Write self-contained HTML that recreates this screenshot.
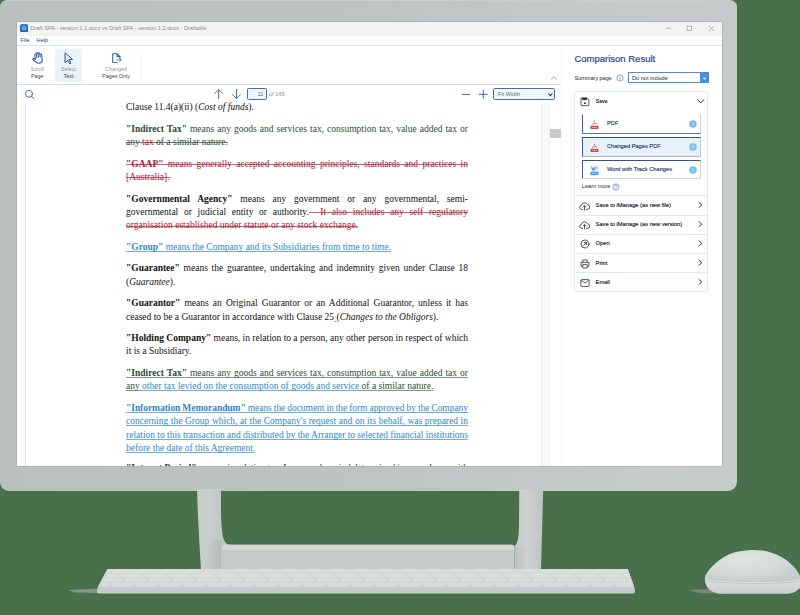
<!DOCTYPE html>
<html>
<head>
<meta charset="utf-8">
<title>Draftable</title>
<style>
html,body{margin:0;padding:0;}
body{width:800px;height:615px;overflow:hidden;background:#47704b;position:relative;font-family:"Liberation Sans",sans-serif;}
.abs{position:absolute;}
#monitor{left:0px;top:0px;width:737.3px;height:490.9px;box-sizing:border-box;border-top:1px solid #c4d3c8;border-radius:7px 7px 9px 9px;background:linear-gradient(90deg,#b9c0be 0%,#bcc3c1 45%,#c4c9c9 80%,#c6caca 100%);}
#screen{left:16.5px;top:21.8px;width:705.5px;height:444.2px;background:#fff;overflow:hidden;box-shadow:0 0 0.8px 0.3px rgba(110,116,116,0.55);}
/* coordinates inside #screen are page coords via this wrapper */
#sc{position:absolute;left:-16.5px;top:-21.8px;width:800px;height:615px;}
#titlebar{left:16px;top:21px;width:707px;height:14.7px;background:#f3f3f3;}
#title{left:30.6px;top:24.6px;font-size:5.6px;line-height:7px;color:#8d8d8d;white-space:nowrap;}
.menu{font-size:5.6px;line-height:7px;color:#24487e;top:37.2px;white-space:nowrap;}
#menuline{left:16px;top:45px;width:707px;height:1px;background:#d3e4f1;}
#tbline{left:16px;top:84px;width:545px;height:1px;background:#d9dcdd;}
.tlabel{font-size:5.4px;line-height:7px;text-align:center;white-space:nowrap;width:60px;}
.l1{color:#8d97a6;}
.l2{color:#3a4358;}
#selbg{left:55px;top:49px;width:27px;height:32.5px;background:#e9f3fb;}
.vsep{width:1px;background:#f4f5f6;top:50px;height:30px;}
/* document */
#docleft{left:16px;top:103px;width:9px;height:364px;background:#f7fbfd;}
#docleftline{left:25px;top:103px;width:1px;height:364px;background:#dfe3e5;}
#docright{left:541px;top:103px;width:9px;height:364px;background:#f6fafc;border-left:1px solid #e4eaed;border-right:1px solid #edf2f4;box-sizing:border-box;}
#thumb{left:550px;top:129px;width:11px;height:9px;background:#c9c9c9;}
#panelline{left:560.5px;top:46px;width:1px;height:421px;background:#f8fafb;}
#doc{left:126px;top:101.2px;width:342px;font-family:"Liberation Serif",serif;font-size:9.5px;line-height:13.3px;color:#111;}
#doc p{margin:0 0 8.3px 0;}
#doc .j{display:block;text-align:justify;text-align-last:justify;white-space:nowrap;}
#doc .e{display:block;white-space:nowrap;}
.del{color:#ad1438;background:linear-gradient(#c4405f,#c4405f) no-repeat 0 5.4px/100% 0.85px;}
.ins{color:#2f86c9;text-decoration:underline;text-decoration-skip-ink:none;text-decoration-color:#6fadde;text-decoration-thickness:0.7px;text-underline-offset:1.3px;}
.mvf{color:#2e4a35;}
.mvs{color:#2e4a35;background:linear-gradient(#3f7d58,#3f7d58) no-repeat 0 5.4px/100% 0.85px;}
.mvt{color:#2e4a35;text-decoration:underline;text-decoration-skip-ink:none;text-decoration-color:#7f9b86;text-decoration-thickness:1.1px;text-underline-offset:1.3px;}
/* right panel */
#ptitle{left:574.4px;top:52.9px;font-size:9.5px;line-height:12px;color:#1f4a8a;-webkit-text-stroke:0.2px #1f4a8a;white-space:nowrap;}
.ptxt{font-size:5.7px;line-height:7px;color:#22262f;white-space:nowrap;}
.sb{-webkit-text-stroke:0.16px currentColor;}
#dd{left:627.5px;top:72.3px;width:81px;height:11px;box-sizing:border-box;border:1px solid #4a8fd2;background:#fff;}
#ddbtn{left:699.5px;top:72.3px;width:9px;height:11px;background:#4690d6;}
#card{left:574.1px;top:91.3px;width:134.4px;height:200.8px;box-sizing:border-box;border:1px solid #dbebf7;border-radius:3px;background:#fff;}
.div{left:575px;width:133px;height:1px;background:#dcebf6;}
.btn{left:582.2px;width:118.8px;height:19.3px;box-sizing:border-box;border:1px solid #c9d3e2;border-left-color:#3f5a9a;background:#fff;}
</style>
</head>
<body>
<div id="monitor" class="abs"></div>
<div id="screen" class="abs"><div id="sc">
  <div id="titlebar" class="abs"></div>
  <!-- app icon -->
  <svg class="abs" style="left:20px;top:23.800px" width="8.200" height="8.200" viewBox="0 0 8.200 8.200"><defs><linearGradient id="ic" x1="0" x2="0" y1="0" y2="1"><stop offset="0" stop-color="#2f86da"/><stop offset="1" stop-color="#1a5fb4"/></linearGradient></defs><rect width="8.200" height="8.200" rx="1.700" fill="url(#ic)"/><path d="M2.700 6.100 V3.600 L4.100 2.300 L5.500 3.600 V6.100 M4.100 4 V6.100" stroke="#d6e8f8" stroke-width="0.750" fill="none"/></svg>
  <div id="title" class="abs">Draft SPA - version 1.1.docx vs Draft SPA - version 1.2.docx - Draftable</div>
  <!-- window controls -->
  <svg class="abs" style="left:660px;top:22px" width="62" height="13" viewBox="0 0 62 13">
    <path d="M6 6.2 H10.8" stroke="#9a9a9a" stroke-width="0.7" fill="none"/>
    <rect x="27.1" y="4.1" width="4.6" height="4.4" fill="none" stroke="#9a9a9a" stroke-width="0.7"/>
    <path d="M49.2 4.1 L54 8.9 M54 4.1 L49.2 8.9" stroke="#9a9a9a" stroke-width="0.7" fill="none"/>
  </svg>
  <div class="abs menu" style="left:20.6px">File</div>
  <div class="abs menu" style="left:36.6px">Help</div>
  <div id="menuline" class="abs"></div>

  <!-- toolbar -->
  <div id="selbg" class="abs"></div>
  <!-- hand -->
  <svg class="abs" style="left:31.5px;top:52.300px" width="11.500" height="12" viewBox="0 0 11.500 12" fill="none" stroke="#2659a6" stroke-width="1" stroke-linecap="round" stroke-linejoin="round">
    <g transform="rotate(-9 5.500 6.500)"><path d="M3.300 7 V2.600 a0.850 0.850 0 0 1 1.700 0 V5.500 M5 1.700 a0.850 0.850 0 0 1 1.700 0 V5.300 M6.700 2 a0.850 0.850 0 0 1 1.700 0 V5.600 M8.400 3.400 a0.850 0.850 0 0 1 1.700 0 V7.600 c0 2.300 -1.500 3.800 -3.500 3.800 c-1.700 0 -2.700 -0.800 -3.600 -2.200 L1 6.800 a0.800 0.800 0 0 1 1.300 -0.900 L3.300 7.200"/></g>
  </svg>
  <!-- cursor -->
  <svg class="abs" style="left:63.5px;top:51.5px" width="10" height="12.5" viewBox="0 0 10 12.5" fill="none" stroke="#2659a6" stroke-width="1" stroke-linejoin="round">
    <path d="M1 0.8 L8.6 7.4 L5.2 7.7 L7 11.2 L5.7 11.8 L4 8.3 L1 10.6 Z"/>
  </svg>
  <!-- changed pages -->
  <svg class="abs" style="left:111.500px;top:52.500px" width="10.300" height="10.800" viewBox="0 0 11 11.5" fill="none" stroke="#2659a6" stroke-width="1.100" stroke-linejoin="round" stroke-linecap="round">
    <path d="M5.8 10.4 H1.6 a0.8 0.8 0 0 1 -0.8 -0.8 V1.6 a0.8 0.8 0 0 1 0.8 -0.8 H5.6 L8.6 3.8 V5.2 M5.4 1 V4 H8.4"/>
    <path d="M5.2 7.4 H9.6 M8 5.8 L9.8 7.4 L8 9" stroke-width="0.8"/>
  </svg>
  <div class="abs tlabel l1" style="left:7.3px;top:66.3px">Scroll</div>
  <div class="abs tlabel l2" style="left:7.3px;top:73.3px">Page</div>
  <div class="abs tlabel l1" style="left:38.5px;top:66.3px">Select</div>
  <div class="abs tlabel l2" style="left:38.5px;top:73.3px">Text</div>
  <div class="abs tlabel l1" style="left:86px;top:66.3px">Changed</div>
  <div class="abs tlabel l2" style="left:86px;top:73.3px">Pages Only</div>
  <div class="abs vsep" style="left:141px"></div>
  <div id="tbline" class="abs"></div>
  <!-- collapse caret -->
  <svg class="abs" style="left:550px;top:75px" width="8" height="6" viewBox="0 0 8 6"><path d="M1.2 4.4 L3.8 1.8 L6.4 4.4" stroke="#5d86bd" stroke-width="0.8" fill="none"/></svg>

  <!-- viewer bar -->
  <svg class="abs" style="left:24px;top:88.5px" width="12" height="11" viewBox="0 0 12 11" fill="none" stroke="#2c5ca8" stroke-width="0.9" stroke-linecap="round"><circle cx="5" cy="4.8" r="3.5"/><path d="M7.6 7.4 L10 9.8"/></svg>
  <svg class="abs" style="left:213px;top:88px" width="30" height="12" viewBox="0 0 30 12" fill="none" stroke="#2c5ca8" stroke-width="0.9" stroke-linecap="round" stroke-linejoin="round">
    <path d="M5.7 10.6 V1.8 M1.8 5.4 L5.7 1.6 L9.6 5.4"/>
    <path d="M23.5 1.6 V10.4 M19.6 6.8 L23.5 10.6 L27.4 6.8"/>
  </svg>
  <div class="abs" style="left:246.8px;top:88.2px;width:20px;height:11.4px;box-sizing:border-box;border:1px solid #3b71b3;border-radius:1.5px;background:#f0f7fc;"></div>
  <div class="abs ptxt" style="left:257.5px;top:90.6px;color:#5a6474;font-size:5.6px">11</div>
  <div class="abs ptxt" style="left:269px;top:90.6px;color:#8a8f98;font-size:5.6px">of 145</div>
  <svg class="abs" style="left:460px;top:88px" width="30" height="12" viewBox="0 0 30 12" fill="none" stroke="#2c5ca8" stroke-width="0.9" stroke-linecap="round">
    <path d="M2.2 6.4 H9.8"/><path d="M19.2 6.3 H27.4 M23.3 2.2 V10.4"/>
  </svg>
  <div class="abs" style="left:493.4px;top:88.4px;width:61.2px;height:11.5px;box-sizing:border-box;border:1px solid #3b71b3;border-radius:1.5px;background:#f0f7fc;"></div>
  <div class="abs ptxt" style="left:498px;top:90.7px;color:#6b6f7a;font-size:5.6px">Fit Width</div>
  <svg class="abs" style="left:546.700px;top:91.500px" width="7" height="6" viewBox="0 0 7 6"><path d="M1.400 1.500 L3.400 3.700 L5.400 1.500" stroke="#2a3040" stroke-width="1.100" fill="none"/></svg>

  <!-- document chrome -->
  <div id="docleft" class="abs"></div><div id="docleftline" class="abs"></div>
  <div id="docright" class="abs"></div>
  <div id="thumb" class="abs"></div>
  <div id="panelline" class="abs"></div>

  <!-- document text -->
  <div id="doc" class="abs">
    <p><span class="e">Clause 11.4(a)(ii) (<i>Cost of funds</i>).</span></p>
    <p><span class="j"><span class="mvf"><b>"Indirect Tax"</b> means any goods and services tax, consumption tax, value added tax or</span></span><span class="e"><span class="mvs">any <span class="del">tax</span> of a similar nature.</span></span></p>
    <p><span class="j"><span class="del"><b>"GAAP"</b> means generally accepted accounting principles, standards and practices in</span></span><span class="e"><span class="del">[Australia].</span></span></p>
    <p><span class="j"><b>"Governmental Agency"</b> means any government or any governmental, semi-</span><span class="j">governmental or judicial entity or authority.<span class="del">&nbsp; It also includes any self regulatory</span></span><span class="e"><span class="del">organisation established under statute or any stock exchange.</span></span></p>
    <p><span class="e"><span class="ins"><b>"Group"</b> means the Company and its Subsidiaries from time to time.</span></span></p>
    <p><span class="j"><b>"Guarantee"</b> means the guarantee, undertaking and indemnity given under Clause 18</span><span class="e">(<i>Guarantee</i>).</span></p>
    <p><span class="j"><b>"Guarantor"</b> means an Original Guarantor or an Additional Guarantor, unless it has</span><span class="e">ceased to be a Guarantor in accordance with Clause 25<span class="ins"> </span>(<i>Changes to the Obligors</i>).</span></p>
    <p><span class="j" style="word-spacing:-0.05px"><b>"Holding Company"</b> means, in relation to a person, any other person in respect of which</span><span class="e">it is a Subsidiary.</span></p>
    <p><span class="j"><span class="mvt"><b>"Indirect Tax"</b> means any goods and services tax, consumption tax, value added tax or</span></span><span class="e"><span class="mvt">any </span><span class="ins">other tax levied on the consumption of goods and service </span><span class="mvt">of a similar nature.</span></span></p>
    <p><span class="j" style="word-spacing:-0.35px;letter-spacing:-0.045px"><span class="ins"><b>"Information Memorandum"</b> means the document in the form approved by the Company</span></span><span class="j"><span class="ins">concerning the Group which, at the Company's request and on its behalf, was prepared in</span></span><span class="j" style="word-spacing:-0.1px"><span class="ins">relation to this transaction and distributed by the Arranger to selected financial institutions</span></span><span class="e"><span class="ins">before the date of this Agreement.</span></span></p>
    <p style="margin-top:-1.1px;color:#3a3a3a"><span class="j" style="word-spacing:-0.25px;letter-spacing:-0.03px"><b>"Interest Period"</b> means, in relation to a Loan, each period determined in accordance with</span></p>
  </div>

  <!-- right panel -->
  <div id="ptitle" class="abs">Comparison Result</div>
  <div class="abs ptxt" style="left:574.5px;top:74.6px;font-size:5.5px">Summary page</div>
  <svg class="abs" style="left:615.5px;top:74px" width="8" height="8" viewBox="0 0 8 8"><circle cx="4" cy="4" r="3.1" fill="none" stroke="#3a67a8" stroke-width="0.6"/><path d="M4 3.4 V5.8 M4 2.2 V2.8" stroke="#3a67a8" stroke-width="0.7"/></svg>
  <div id="dd" class="abs"></div><div id="ddbtn" class="abs"></div>
  <svg class="abs" style="left:701.800px;top:76.500px" width="5" height="4" viewBox="0 0 5 4"><path d="M0.700 0.700 H4.100 L2.400 2.800 Z" fill="#fff"/></svg>
  <div class="abs ptxt" style="left:632px;top:74.500px;font-size:5.6px;color:#23272f">Do not include</div>

  <div id="card" class="abs"></div>
  <!-- save icon -->
  <svg class="abs" style="left:579.600px;top:96.800px" width="10" height="10" viewBox="0 0 10 10" fill="none" stroke="#2c2f37" stroke-width="0.800" stroke-linejoin="round"><path d="M1.700 0.800 H7 L8.800 2.600 V8 a0.700 0.700 0 0 1 -0.700 0.700 H1.700 a0.700 0.700 0 0 1 -0.700 -0.700 V1.500 a0.700 0.700 0 0 1 0.700 -0.700 Z"/><path d="M2.400 1 V2.900 H6.800 V1" fill="#2c2f37" stroke-width="0.400"/><rect x="4" y="5.300" width="1.800" height="1.800" rx="0.500" fill="#2c2f37" stroke="none"/></svg>
  <div class="abs ptxt" style="left:595.8px;top:97.8px;font-weight:bold;font-size:5.1px">Save</div>
  <svg class="abs" style="left:696px;top:98px" width="10" height="7" viewBox="0 0 10 7"><path d="M1.300 1.400 L4.800 4.800 L8.300 1.400" stroke="#22262e" stroke-width="0.95" fill="none"/></svg>

  <div class="abs btn" style="top:114.4px;border-top-color:#fff;border-bottom-color:#5f72a6;"></div>
  <div class="abs btn" style="top:137.3px;background:#e6f1fa;border-top-color:#35508e;border-bottom-color:#a8b4c8;border-right-color:#b8c2d2"></div>
  <div class="abs btn" style="top:160.1px;border-top-color:#33508f;border-bottom-color:#cdd6e4;"></div>

  <!-- pdf icons -->
  <svg class="abs" style="left:589.5px;top:119px" width="9" height="10.5" viewBox="0 0 9 10.5"><rect x="0.6" y="0.3" width="7.8" height="9.8" fill="#fbfbfb" stroke="#e8e8e8" stroke-width="0.3"/><path d="M2.200 5.800 C3.600 5.200 4.700 3.300 4.800 1.600 C4.500 1.200 4.200 1.800 4.500 2.700 C5 4.200 6 5 7.200 5.100 C7.600 4.700 6.400 4.500 5.300 4.700 C4 4.900 2.800 5.300 2.200 5.800 Z" fill="none" stroke="#d8453f" stroke-width="0.5"/><rect x="0.600" y="6.900" width="7.800" height="3" fill="#cb3a32"/><path d="M2.300 8.400 H6.800" stroke="#f6dedd" stroke-width="1" stroke-dasharray="1.200 0.500"/></svg>
  <svg class="abs" style="left:589.5px;top:142px" width="9" height="10.5" viewBox="0 0 9 10.5"><rect x="0.6" y="0.3" width="7.8" height="9.8" fill="#f4f8fb" stroke="#dde6ee" stroke-width="0.3"/><path d="M2.200 5.800 C3.600 5.200 4.700 3.300 4.800 1.600 C4.500 1.200 4.200 1.800 4.500 2.700 C5 4.200 6 5 7.200 5.100 C7.600 4.700 6.400 4.500 5.300 4.700 C4 4.900 2.800 5.300 2.200 5.800 Z" fill="none" stroke="#d8453f" stroke-width="0.5"/><rect x="0.600" y="6.900" width="7.800" height="3" fill="#cb3a32"/><path d="M2.300 8.400 H6.800" stroke="#f6dedd" stroke-width="1" stroke-dasharray="1.200 0.500"/></svg>
  <svg class="abs" style="left:589.5px;top:165px" width="9" height="10.5" viewBox="0 0 9 10.5"><rect x="0.6" y="0.3" width="7.8" height="9.8" fill="#eef6fc" stroke="#d5e6f3" stroke-width="0.3"/><path d="M1.6 1.8 L2.6 5.4 L3.5 2.6 L4.4 5.4 L5.4 1.8" fill="none" stroke="#2a7cd0" stroke-width="0.8"/><path d="M6.2 2.4 H7.6 M6.2 4 H7.6" stroke="#2a7cd0" stroke-width="0.6"/><rect x="0.600" y="6.700" width="7.800" height="3.300" fill="#2f97e2"/><path d="M1.800 8.400 H7.400" stroke="#dff0fb" stroke-width="1" stroke-dasharray="1.100 0.450"/></svg>
  <div class="abs ptxt sb" style="left:607px;top:120px;color:#2f4170">PDF</div>
  <div class="abs ptxt sb" style="left:607px;top:142.800px;color:#2f4170">Changed Pages PDF</div>
  <div class="abs ptxt sb" style="left:607px;top:165.700px;color:#2f4170">Word with Track Changes</div>
  <svg class="abs" style="left:689px;top:120px" width="8" height="8" viewBox="0 0 8 8"><circle cx="4" cy="4" r="3.75" fill="#7cbdeb"/><path d="M3.3 2.4 L4.9 4 L3.3 5.6" stroke="#e8f4fc" stroke-width="0.8" fill="none"/></svg>
  <svg class="abs" style="left:689px;top:142.8px" width="8" height="8" viewBox="0 0 8 8"><circle cx="4" cy="4" r="3.75" fill="#7cbdeb"/><path d="M3.3 2.4 L4.9 4 L3.3 5.6" stroke="#e8f4fc" stroke-width="0.8" fill="none"/></svg>
  <svg class="abs" style="left:689px;top:165.6px" width="8" height="8" viewBox="0 0 8 8"><circle cx="4" cy="4" r="3.75" fill="#7cbdeb"/><path d="M3.3 2.4 L4.9 4 L3.3 5.6" stroke="#e8f4fc" stroke-width="0.8" fill="none"/></svg>
  <div class="abs ptxt" style="left:581.8px;top:183.4px;font-size:5.6px">Learn more</div>
  <svg class="abs" style="left:611.6px;top:183px" width="8" height="8" viewBox="0 0 8 8"><circle cx="4" cy="4" r="3.1" fill="none" stroke="#3a67a8" stroke-width="0.6"/><path d="M3 3.2 C3 2 5 2 5 3.2 C5 4 4 4 4 4.8 M4 5.6 V6.1" stroke="#3a67a8" stroke-width="0.6" fill="none"/></svg>

  <div class="abs div" style="top:195.4px"></div>
  <div class="abs div" style="top:214.6px"></div>
  <div class="abs div" style="top:233.8px"></div>
  <div class="abs div" style="top:253.1px"></div>
  <div class="abs div" style="top:272.3px"></div>

  <!-- row icons -->
  <svg class="abs" style="left:579px;top:200.5px" width="11" height="10" viewBox="0 0 11 10" fill="none" stroke="#2b2f38" stroke-width="0.8" stroke-linejoin="round" stroke-linecap="round"><path d="M3.6 8.4 H2.8 a2 2 0 0 1 -0.3 -4 a3 3 0 0 1 5.8 -0.6 a2.3 2.3 0 0 1 0.2 4.6 H7.4"/><path d="M5.5 9 V4.8 M4 6.2 L5.5 4.7 L7 6.2"/></svg>
  <svg class="abs" style="left:579px;top:219.7px" width="11" height="10" viewBox="0 0 11 10" fill="none" stroke="#2b2f38" stroke-width="0.8" stroke-linejoin="round" stroke-linecap="round"><path d="M3.6 8.4 H2.8 a2 2 0 0 1 -0.3 -4 a3 3 0 0 1 5.8 -0.6 a2.3 2.3 0 0 1 0.2 4.6 H7.4"/><path d="M5.5 9 V4.8 M4 6.2 L5.5 4.7 L7 6.2"/></svg>
  <svg class="abs" style="left:579.5px;top:239.2px" width="10" height="10" viewBox="0 0 10 10" fill="none" stroke="#2b2f38" stroke-width="0.8" stroke-linecap="round" stroke-linejoin="round"><circle cx="5" cy="5" r="4"/><path d="M3.6 6.4 L6.3 3.7 M4.4 3.6 H6.4 V5.6"/></svg>
  <svg class="abs" style="left:579.5px;top:258.5px" width="10" height="10" viewBox="0 0 10 10" fill="none" stroke="#2b2f38" stroke-width="0.8" stroke-linejoin="round"><path d="M2.8 3.2 V1 H7.2 V3.2"/><path d="M2.6 7.2 H1 V3.4 H9 V7.2 H7.4"/><rect x="2.8" y="5.6" width="4.4" height="3.4"/></svg>
  <svg class="abs" style="left:579.5px;top:277.8px" width="10" height="10" viewBox="0 0 10 10" fill="none" stroke="#2b2f38" stroke-width="0.8" stroke-linejoin="round"><rect x="0.9" y="1.6" width="8.2" height="6.8" rx="0.6"/><path d="M1.2 2.2 L5 5.2 L8.8 2.2"/></svg>
  <div class="abs ptxt sb" style="left:595.6px;top:202.1px;font-size:5.72px">Save to iManage (as new file)</div>
  <div class="abs ptxt sb" style="left:595.6px;top:221.3px;font-size:5.72px">Save to iManage (as new version)</div>
  <div class="abs ptxt sb" style="left:595.6px;top:240.200px;font-size:5.72px">Open</div>
  <div class="abs ptxt sb" style="left:595.6px;top:259.9px;font-size:5.72px">Print</div>
  <div class="abs ptxt sb" style="left:595.6px;top:279.2px;font-size:5.72px">Email</div>
  <svg class="abs" style="left:696px;top:200.400px" width="8" height="88" viewBox="0 0 8 88" fill="none" stroke="#2b2f38" stroke-width="0.9">
    <path d="M2.600 2.300 L5.900 5 L2.600 7.700"/><path d="M2.600 21.500 L5.900 24.200 L2.600 26.900"/><path d="M2.600 40.700 L5.900 43.400 L2.600 46.100"/><path d="M2.600 60 L5.900 62.700 L2.600 65.400"/><path d="M2.600 79.200 L5.900 81.900 L2.600 84.600"/>
  </svg>
</div></div>

<!-- stand, keyboard, mouse -->
<svg class="abs" style="left:0;top:0" width="800" height="615" viewBox="0 0 800 615">
  <defs>
    <linearGradient id="legL" x1="0" x2="1" y1="0" y2="0"><stop offset="0" stop-color="#c6cccb"/><stop offset="0.35" stop-color="#c9cfce"/><stop offset="0.7" stop-color="#c1c7c6"/><stop offset="1" stop-color="#babfbe"/></linearGradient>
    <linearGradient id="legR" x1="0" x2="1" y1="0" y2="0"><stop offset="0" stop-color="#c6cccb"/><stop offset="0.4" stop-color="#cdd2d1"/><stop offset="1" stop-color="#bec4c3"/></linearGradient>
    <linearGradient id="shL" x1="0" x2="1" y1="0" y2="0"><stop offset="0" stop-color="#b4bab8" stop-opacity="0"/><stop offset="1" stop-color="#b2b8b6" stop-opacity="0.75"/></linearGradient><linearGradient id="shR" x1="0" x2="1" y1="0" y2="0"><stop offset="0" stop-color="#b6bcba" stop-opacity="0.6"/><stop offset="1" stop-color="#b6bcba" stop-opacity="0"/></linearGradient><linearGradient id="base" x1="0" x2="0" y1="0" y2="1"><stop offset="0" stop-color="#dde1e0"/><stop offset="0.18" stop-color="#d6dad9"/><stop offset="0.24" stop-color="#c6cbca"/><stop offset="1" stop-color="#c9cecd"/></linearGradient>
    <linearGradient id="kb" x1="0" x2="0" y1="0" y2="1"><stop offset="0" stop-color="#dfe3e2"/><stop offset="1" stop-color="#d3d8d7"/></linearGradient>
    <radialGradient id="ms" cx="0.38" cy="0.3" r="0.75"><stop offset="0" stop-color="#dfe3e2"/><stop offset="0.55" stop-color="#d6dbda"/><stop offset="1" stop-color="#c4cac9"/></radialGradient>
    <linearGradient id="msb" x1="0" x2="0" y1="0" y2="1"><stop offset="0" stop-color="#d9dedd"/><stop offset="0.35" stop-color="#d6dbda"/><stop offset="1" stop-color="#c8cecd"/></linearGradient>
  </defs>
  <!-- legs -->
  <path d="M197 489 H221 V514 C221.300 524 222 532 223 536.500 C224.200 542 226.500 544.700 230.500 544.700 V570 H201 C199.600 545 197.600 515 197 489 Z" fill="url(#legL)"/>
  <path d="M519.300 489 H543.200 L541 570 H514.800 V546 C517 544 518.400 540 518.900 530 Z" fill="url(#legR)"/>
  <!-- base -->
  <path d="M223 544.700 H511.500 Q514.500 544.700 514.600 547.500 V570 H221 V545.500 Z" fill="#c7cccb"/>
  <path d="M224.500 544.700 H511.500 Q513.600 544.700 514.200 546.500 L514.500 550.600 H221.200 Z" fill="#d3d8d7"/>
  <path d="M221.200 550.700 H514.500" stroke="#b9bfbd" stroke-width="0.6" fill="none"/>
  <path d="M206 540 H221.200 V570 H206 Z" fill="url(#shL)"/>
  <path d="M514.800 546 H528 V570 H514.800 Z" fill="url(#shR)"/>
  <!-- keyboard shadow -->
  <path d="M68.500 590 L98 588.600 L98 593 L74 592.600 Z" fill="#8f9392" opacity="0.9"/>
  <!-- keyboard -->
  <path d="M107.500 569 H627.700 L634.500 587.500 L635 592 Q635 593.400 633 593.400 H99 Q96.800 593.400 97 591.500 L97.500 588 Z" fill="#c6cccb"/>
  <path d="M107.500 569 H627.700 L634.200 587.300 H97.800 Z" fill="url(#kb)"/>
  <path d="M107.500 569 H627.700 L634.200 587.300 H97.800 Z" fill="#ced3d2" opacity="0.5"/>
  <g stroke="#dadedd" stroke-width="3" fill="none" stroke-dasharray="19.5 4.5">
    <path d="M108.600 571 H627" stroke-dashoffset="0"/>
    <path d="M106.400 575.500 H629" stroke-dashoffset="9"/>
    <path d="M104.200 580 H630.600" stroke-dashoffset="3"/>
    <path d="M101.800 584.700 H632.400" stroke-dashoffset="14" stroke-width="3.4"/>
  </g>
  <!-- mouse shadow -->
  <path d="M688.500 590 L712 588.800 L724 593.600 L699 593 Z" fill="#858888" opacity="0.9"/>
  <!-- mouse -->
  <path d="M704.800 579 C704.900 583 706.500 587.500 710.500 590.500 C714 593 718 593.800 722 593.800 H788 C793 593.800 797.500 591 801 587 V578 Z" fill="url(#msb)"/>
  <path d="M704.700 578.300 C705.500 575 706.500 573.500 707.500 571.900 C709 569.800 710.500 568 712.500 566.200 C714.500 564.200 716.500 562.400 718.800 560.600 C720.800 559 722.800 557.700 725 556.500 C727.500 555.100 730 554 732.500 553.100 C735.800 552 739 551.400 742.500 551 C746 550.500 749 550.100 752.500 550 C756 550 759 550.200 762.500 550.600 C766 551.200 769.500 552 772.500 553.100 C775.600 554.200 778.500 555.500 781.200 556.900 C784 558.300 786.500 560 788.800 561.900 C791 563.800 793 565.800 795 568.100 C796.500 569.900 797.800 571.800 798.800 573.800 L801 577 V579.300 C796 580.800 792 581.200 787.500 581.500 C775 582.400 762 582.600 750 582.500 C739 582.400 728 582.200 718.800 581.500 C713 581 708 580 704.700 578.300 Z" fill="url(#ms)"/>
  <path d="M705 578.600 C708 580.200 713 581.100 718.800 581.500 C728 582.200 739 582.500 750 582.600 C762 582.700 775 582.500 787.500 581.600 C792 581.300 796 580.900 801 579.400" stroke="#e6eae9" stroke-width="0.7" fill="none"/>
  <path d="M705.200 579.500 C708 581 713 581.900 718.800 582.300 C728 583 739 583.300 750 583.400 C762 583.500 775 583.300 787.500 582.400 C792 582.100 796 581.700 801 580.200" stroke="#b4bab9" stroke-width="0.6" fill="none"/>
</svg>
</body>
</html>
